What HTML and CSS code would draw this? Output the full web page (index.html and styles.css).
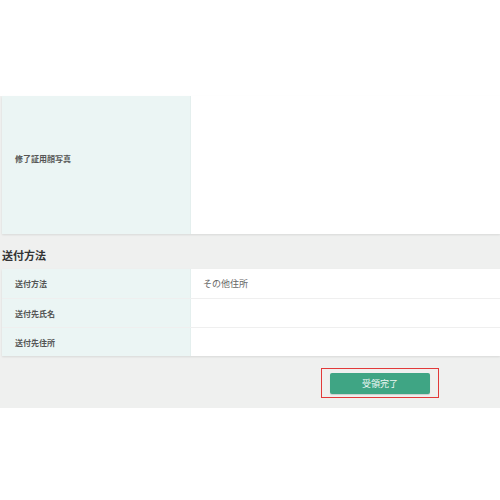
FILE: index.html
```html
<!DOCTYPE html>
<html lang="ja">
<head>
<meta charset="utf-8">
<link rel="stylesheet" href="styles.css">
</head>
<body>
<div class="top"></div>
<div class="panel">
  <div class="table photo">
    <div class="row tall">
      <div class="label raised">修了証用顔写真</div>
      <div class="value"></div>
    </div>
  </div>
  <h2 class="heading">送付方法</h2>
  <div class="table">
    <div class="row">
      <div class="label">送付方法</div>
      <div class="value">その他住所</div>
    </div>
    <div class="row">
      <div class="label">送付先氏名</div>
      <div class="value"></div>
    </div>
    <div class="row">
      <div class="label">送付先住所</div>
      <div class="value"></div>
    </div>
  </div>
  <div class="actions">
    <div class="focus">
      <button class="btn">受領完了</button>
    </div>
  </div>
</div>
</body>
</html>
```
FILE: styles.css
```css
* { box-sizing: border-box; }
html, body { margin: 0; padding: 0; background: #fff; }
body { font-family: "Noto Sans CJK JP", "Noto Sans", sans-serif; width: 500px; }
.top { height: 96px; background: #fff; }
.panel { background: #eff0ef; padding: 0 0 0 2px; height: 312px; }
.table {
  background: #fff;
  box-shadow: 0 1px 2px rgba(0,0,0,0.10);
}
.row {
  display: flex;
  height: 29px;
  border-top: 1px solid #efefef;
}
.row:first-child { border-top: none; }
.row.tall { height: 138px; }
.label {
  width: 189px;
  flex: none;
  background: #ebf5f4;
  border-right: 1px solid #e4efee;
  display: flex;
  align-items: center;
  padding-left: 13px;
  font-size: 8px;
  font-weight: bold;
  color: #555;
}
.label.raised { padding-bottom: 14px; }
.value {
  flex: 1;
  display: flex;
  align-items: center;
  padding-left: 12px;
  font-size: 9px;
  color: #666;
}
.heading {
  margin: 0;
  height: 35px;
  display: flex;
  align-items: center;
  padding-top: 7px;
  font-size: 11px;
  font-weight: bold;
  color: #333;
}
.actions {
  display: flex;
  padding: 12px 0 0 319px;
}
.focus {
  border: 1.5px solid #e23a3a;
  padding: 3.5px 8px 3.5px 8px;
}
.btn {
  display: block;
  width: 100px;
  height: 21px;
  border: none;
  border-radius: 2px;
  background: #3fa584;
  color: #eef8f4;
  font-family: "Noto Sans CJK JP", sans-serif;
  font-size: 9px;
  padding: 0;
  box-shadow: 0 1px 1px rgba(0,0,0,0.15);
}
```
